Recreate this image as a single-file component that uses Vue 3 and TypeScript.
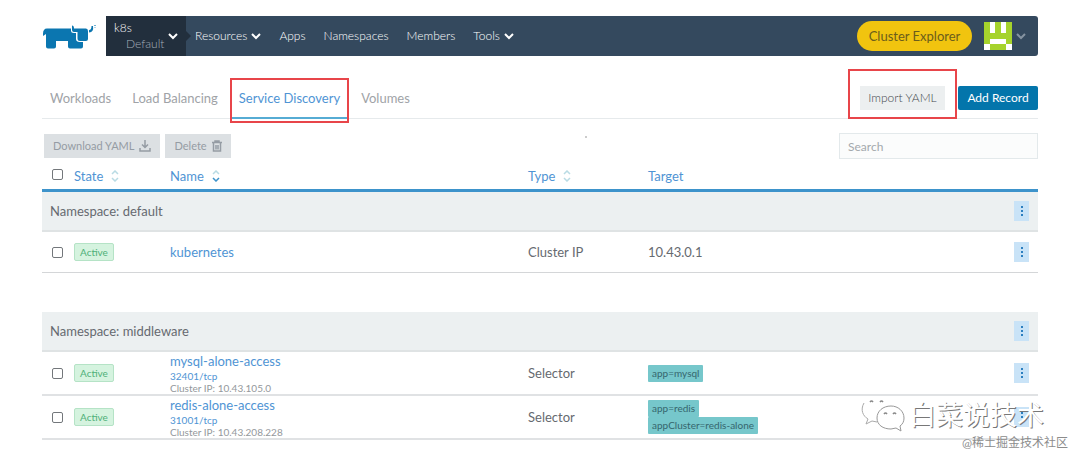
<script setup lang="ts">
interface Service {
  name: string
  port?: string
  clusterIp?: string
  type: string
  target?: string
  selectors?: string[]
}
interface Group {
  namespace: string
  services: Service[]
}

const navLinks = [
  { label: 'Resources', menu: true },
  { label: 'Apps', menu: false },
  { label: 'Namespaces', menu: false },
  { label: 'Members', menu: false },
  { label: 'Tools', menu: true },
]
const tabs = ['Workloads', 'Load Balancing', 'Service Discovery', 'Volumes']
const activeTab = 'Service Discovery'

const groups: Group[] = [
  {
    namespace: 'default',
    services: [{ name: 'kubernetes', type: 'Cluster IP', target: '10.43.0.1' }],
  },
  {
    namespace: 'middleware',
    services: [
      { name: 'mysql-alone-access', port: '32401/tcp', clusterIp: '10.43.105.0', type: 'Selector', selectors: ['app=mysql'] },
      { name: 'redis-alone-access', port: '31001/tcp', clusterIp: '10.43.208.228', type: 'Selector', selectors: ['app=redis', 'appCluster=redis-alone'] },
    ],
  },
]
</script>

<template>
  <div class="page">
    <header class="top">
      <a href="#" class="logo" aria-label="Rancher">
        <svg viewBox="0 0 54 26" width="54" height="26">
          <path fill="#0b76b0" d="M1 10 Q1 4.500 5 4.500 H29 V6.500 Q29 9 32 9 H34 V15 Q34 18 38 18 H41 V22.500 Q41 24.500 39 24.500 H28 Q26 24.500 26 22.500 V17 H14 V22.500 Q14 24.500 12 24.500 H6 Q4 24.500 4 22.500 V10 L1 12 Z" />
          <path fill="#0b76b0" d="M30 1.500 Q32 1.500 32 4.500 H44 Q46 4.500 46 7 V15 Q46 17 44 17 H38 Q35.500 17 35.500 14.500 V8 H32 Q30 8 30 6 Z" />
          <path fill="#0b76b0" d="M47 8.500 V6 Q49.500 6 49.500 2 L51 2 Q52 8 47 8.500 Z" />
          <path fill="none" stroke="#6fb0d4" stroke-width="1" d="M52 1.500 H54 M52.500 3.500 H53.500" />
        </svg>
      </a>
      <nav class="bar">
        <button type="button" class="scope">
          <span class="scope-text"><span class="cluster">k8s</span><span class="project">Default</span></span>
          <svg class="chev" viewBox="0 0 10 7" width="10" height="7"><path d="M1 1 L5 5 L9 1" /></svg>
        </button>
        <a v-for="l in navLinks" :key="l.label" href="#" class="nav-link">{{ l.label }}
          <svg v-if="l.menu" class="chev" viewBox="0 0 10 7" width="10" height="7"><path d="M1 1 L5 5 L9 1" /></svg>
        </a>
        <button type="button" class="explorer">Cluster Explorer</button>
        <button type="button" class="user" aria-label="User menu">
          <svg viewBox="0 0 5 5" width="28" height="28" shape-rendering="crispEdges">
            <rect width="5" height="5" fill="#fff" />
            <path fill="#a6d32c" d="M0 0H1V2H2V0H2V2H2V1H3V2H4V0H5V4H4V3H1V4H0z M2 0H3V1H2z M1 4H4V5H1z" />
          </svg>
          <svg class="chev dim" viewBox="0 0 10 7" width="10" height="7"><path d="M1 1 L5 5 L9 1" /></svg>
        </button>
      </nav>
    </header>

    <div class="tabs">
      <a v-for="t in tabs" :key="t" href="#" class="tab" :class="{ active: t === activeTab }">{{ t }}</a>
      <div class="tab-actions">
        <div class="marked"><button type="button" class="btn light">Import YAML</button></div>
        <button type="button" class="btn primary">Add Record</button>
      </div>
    </div>

    <div class="tools">
      <button type="button" class="btn grey">Download YAML
        <svg viewBox="0 0 12 12" width="12" height="12"><path fill="none" stroke="currentColor" stroke-width="1.500" d="M6 0 V7 M3 4.500 L6 7.500 L9 4.500 M1 8 V11 H11 V8" /></svg>
      </button>
      <button type="button" class="btn grey">Delete
        <svg viewBox="0 0 10 12" width="10" height="12"><path fill="none" stroke="currentColor" stroke-width="1.500" d="M0 2.500 H10 M3 2.500 V1 H7 V2.500 M1.500 3 V11 H8.500 V3 M4 5 V9.500 M6 5 V9.500" /></svg>
      </button>
      <span class="dot"></span>
      <input type="search" class="search" placeholder="Search" aria-label="Search" />
    </div>

    <table class="grid">
      <colgroup>
        <col class="c-check" /><col class="c-state" /><col class="c-name" /><col class="c-type" /><col /><col class="c-act" />
      </colgroup>
      <thead>
        <tr>
          <th><input type="checkbox" aria-label="Select all" /></th>
          <th v-for="h in ['State', 'Name', 'Type', 'Target']" :key="h">
            <button type="button" class="sort">{{ h }}
              <svg v-if="h !== 'Target'" viewBox="0 0 8 12" width="8" height="12">
                <path class="faint" d="M1 4 L4 1 L7 4" />
                <path :class="h === 'Name' ? 'strong' : 'faint'" d="M1 8 L4 11 L7 8" />
              </svg>
            </button>
          </th>
          <th></th>
        </tr>
      </thead>
      <tbody v-for="(g, gi) in groups" :key="g.namespace">
        <tr v-if="gi > 0" class="spacer"><td colspan="6"></td></tr>
        <tr class="group">
          <td colspan="5" class="ns">Namespace: {{ g.namespace }}</td>
          <td class="act"><button type="button" class="more" :aria-label="'Actions for ' + g.namespace"><i></i><i></i><i></i></button></td>
        </tr>
        <tr v-for="s in g.services" :key="s.name" class="row" :class="{ tall: s.port }">
          <td><input type="checkbox" :aria-label="'Select ' + s.name" /></td>
          <td><span class="badge">Active</span></td>
          <td class="name-cell">
            <a href="#" class="name">{{ s.name }}</a>
            <a v-if="s.port" href="#" class="port">{{ s.port }}</a>
            <span v-if="s.clusterIp" class="ip">Cluster IP: {{ s.clusterIp }}</span>
          </td>
          <td>{{ s.type }}</td>
          <td>
            <template v-if="s.target">{{ s.target }}</template>
            <div v-for="sel in s.selectors" :key="sel" class="sel-line"><span class="sel">{{ sel }}</span></div>
          </td>
          <td class="act"><button type="button" class="more" :aria-label="'Actions for ' + s.name"><i></i><i></i><i></i></button></td>
        </tr>
      </tbody>
    </table>

    <div class="mark">
      <svg viewBox="0 0 44 36" width="44" height="36">
        <g fill="#fff">
          <path d="M16 1 C8 1 1 6 1 13 C1 17 3 20 7 23 L5 28 L11 25 C13 26 15 26 18 26 C26 25 31 20 31 13 C31 6 24 1 16 1 Z" />
          <path fill="none" stroke="#aaa" d="M3 7 C-1 14 2 20 7 23 L5 28 L11 25 L16 26" />
          <path stroke="#999" d="M30 10 C22 10 16 15 16 22 C16 29 22 33 30 33 L35 32 L40 35 L39 30 C42 28 43 25 43 22 C43 15 37 10 30 10 Z" />
        </g>
        <path fill="none" stroke="#888" stroke-width="1.500" d="M9 6 Q10.500 4 12 6 M19 6 Q20.500 4 22 6 M23 18 Q24.500 16 26 18 M32 18 Q33.500 16 35 18" />
      </svg>
      <span>白菜说技术</span>
    </div>
    <div class="credit">@稀土掘金技术社区</div>
  </div>
</template>

<style>
body { margin: 0; background: #fff; }
</style>

<style scoped>
.page {
  position: relative;
  box-sizing: border-box;
  padding: 16px 42px 21px;
  font-family: Lato, "Noto Sans CJK SC", sans-serif;
  font-size: 13px;
  line-height: 16px;
  color: #666a70;
}
button, input { font: inherit; margin: 0; box-sizing: border-box; }
button { border: 0; padding: 0; background: none; color: inherit; white-space: nowrap; }
a { text-decoration: none; color: inherit; }
svg { display: block; flex: none; }

.top { display: flex; height: 40px; }
.logo { width: 64px; padding-top: 8px; box-sizing: border-box; }
.bar {
  flex: 1;
  display: flex;
  align-items: center;
  background: #34495e;
  color: #fff;
  font-size: 12px;
  font-weight: 300;
  border-radius: 0 3px 3px 0;
}
.scope {
  display: flex;
  align-items: center;
  justify-content: space-between;
  width: 80px;
  height: 40px;
  padding: 0 8px;
  margin-right: 9px;
  background: #222f3d;
  position: relative;
}
.scope::after {
  content: "";
  position: absolute;
  left: 80px;
  top: 15px;
  border: 5px solid transparent;
  border-left-color: #222f3d;
  border-right: 0;
}
.scope-text { display: flex; flex-direction: column; text-align: left; line-height: 16px; }
.cluster { color: #fff; }
.project { padding-left: 12px; color: #a3adb7; }
.chev { fill: none; stroke: #fff; stroke-width: 2; }
.chev.dim { stroke: #8593a1; }
.nav-link { display: flex; align-items: center; gap: 4px; margin-right: 18px; }
.explorer {
  margin-left: auto;
  width: 115px;
  height: 30px;
  border-radius: 15px;
  background: #f1c40f;
  color: #6b5d1c;
  font-size: 13px;
  font-weight: 400;
}
.user { display: flex; align-items: center; gap: 4px; margin: 0 12px; }

.tabs {
  display: flex;
  align-items: center;
  gap: 21px;
  box-sizing: border-box;
  height: 63px;
  padding: 21px 0 0 8px;
  border-bottom: 1px solid #e6eaec;
}
.tab { color: #a0a3a7; line-height: 42px; position: relative; }
.tab.active { color: #4f94d4; line-height: 42px; }
.tab.active::after {
  content: "";
  position: absolute;
  inset: 1px -9px -4px;
  border: 2px solid #e8454a;
}
.tab.active::before {
  content: "";
  position: absolute;
  inset: auto -7px 0;
  height: 2px;
  background: #56acd4;
}
.tab-actions { margin-left: auto; display: flex; align-items: center; }
.btn { display: inline-flex; align-items: center; justify-content: center; height: 24px; gap: 5px; font-size: 12px; }
.marked { position: relative; margin-right: 13px; }
.marked::after {
  content: "";
  position: absolute;
  inset: -17px -12px -9px;
  border: 2px solid #e8454a;
}
.btn.light { width: 85px; background: #eceff0; color: #44494e; font-weight: 300; }
.btn.primary { width: 80px; background: #0375ab; color: #fff; border-radius: 2px; }
.btn.grey { padding: 0 9px; background: #dce0e3; color: #959ca4; font-size: 11px; }

.tools { display: flex; align-items: center; gap: 5px; height: 26px; margin-top: 14px; padding-left: 2px; }
.dot { width: 2px; height: 2px; margin: 0 247px 18px auto; background: #bbb; border-radius: 1px; }
.search { width: 199px; height: 26px; padding: 0 8px; border: 1px solid #e3e9eb; background: #fbfcfc; font-size: 12px; outline: 0; appearance: none; }
.search::placeholder { color: #a4a9ad; opacity: 1; }

.grid { width: 100%; table-layout: fixed; border-collapse: separate; border-spacing: 0; }
.c-check { width: 32px; }
.c-state { width: 96px; }
.c-name { width: 358px; }
.c-type { width: 120px; }
.c-act { width: 24px; }
th, td { padding: 0; text-align: left; vertical-align: middle; font-weight: 400; }
th { height: 26px; padding-top: 4px; border-bottom: 3px solid #3d93cb; color: #4f94d4; }
th:first-child { padding-top: 0; }
th:first-child, td:first-child:not([colspan]) { padding-left: 10px; }
input[type="checkbox"] { appearance: none; display: block; width: 11px; height: 11px; border: 1px solid #73777b; border-radius: 2px; background: #fff; }
.sort { display: flex; align-items: center; gap: 8px; }
.sort path { fill: none; stroke-width: 1.500; }
.sort .faint { stroke: #b9dbe4; }
.sort .strong { stroke: #3d93cb; }
.group td { height: 38px; background: #ecf0f1; border-bottom: 2px solid #dfe3e4; }
.group td.ns { padding-left: 8px; }
.row td { height: 40px; border-bottom: 1px solid #d4d6d8; }
.row.tall td { height: 42px; border-bottom: 2px solid #e0e2e4; }
.spacer td { height: 39px; }
.badge { display: inline-block; padding: 0 5px; border: 1px solid #b5e3c6; border-radius: 2px; background: #d5f3df; color: #4fb078; font-size: 10px; line-height: 16px; vertical-align: middle; }
.name-cell a, .ip { display: block; }
.name { color: #4f94d4; }
.port { color: #4f94d4; font-size: 10px; line-height: 14px; }
.ip { color: #94989c; font-size: 10px; line-height: 10px; }
.sel-line { height: 17px; }
.sel { display: inline-block; padding: 0 4px; background: #76c7cb; color: #35666d; font-size: 10px; line-height: 17px; border-radius: 1px; vertical-align: top; }
.more { display: flex; flex-direction: column; align-items: center; justify-content: center; gap: 2px; width: 15px; height: 20px; background: #c9e3f7; }
.more i { width: 2px; height: 2px; background: #2c7fc0; }

.mark {
  position: absolute;
  right: 36px;
  bottom: 29px;
  display: flex;
  align-items: center;
  gap: 4px;
  font-family: "Noto Sans CJK SC", sans-serif;
  font-size: 27px;
  line-height: 36px;
  color: #fff;
  text-shadow: 1px 1px 0 #777;
}
.credit { position: absolute; right: 12px; bottom: 9px; font-size: 12px; line-height: 18px; color: #8c8c8c; }
</style>
